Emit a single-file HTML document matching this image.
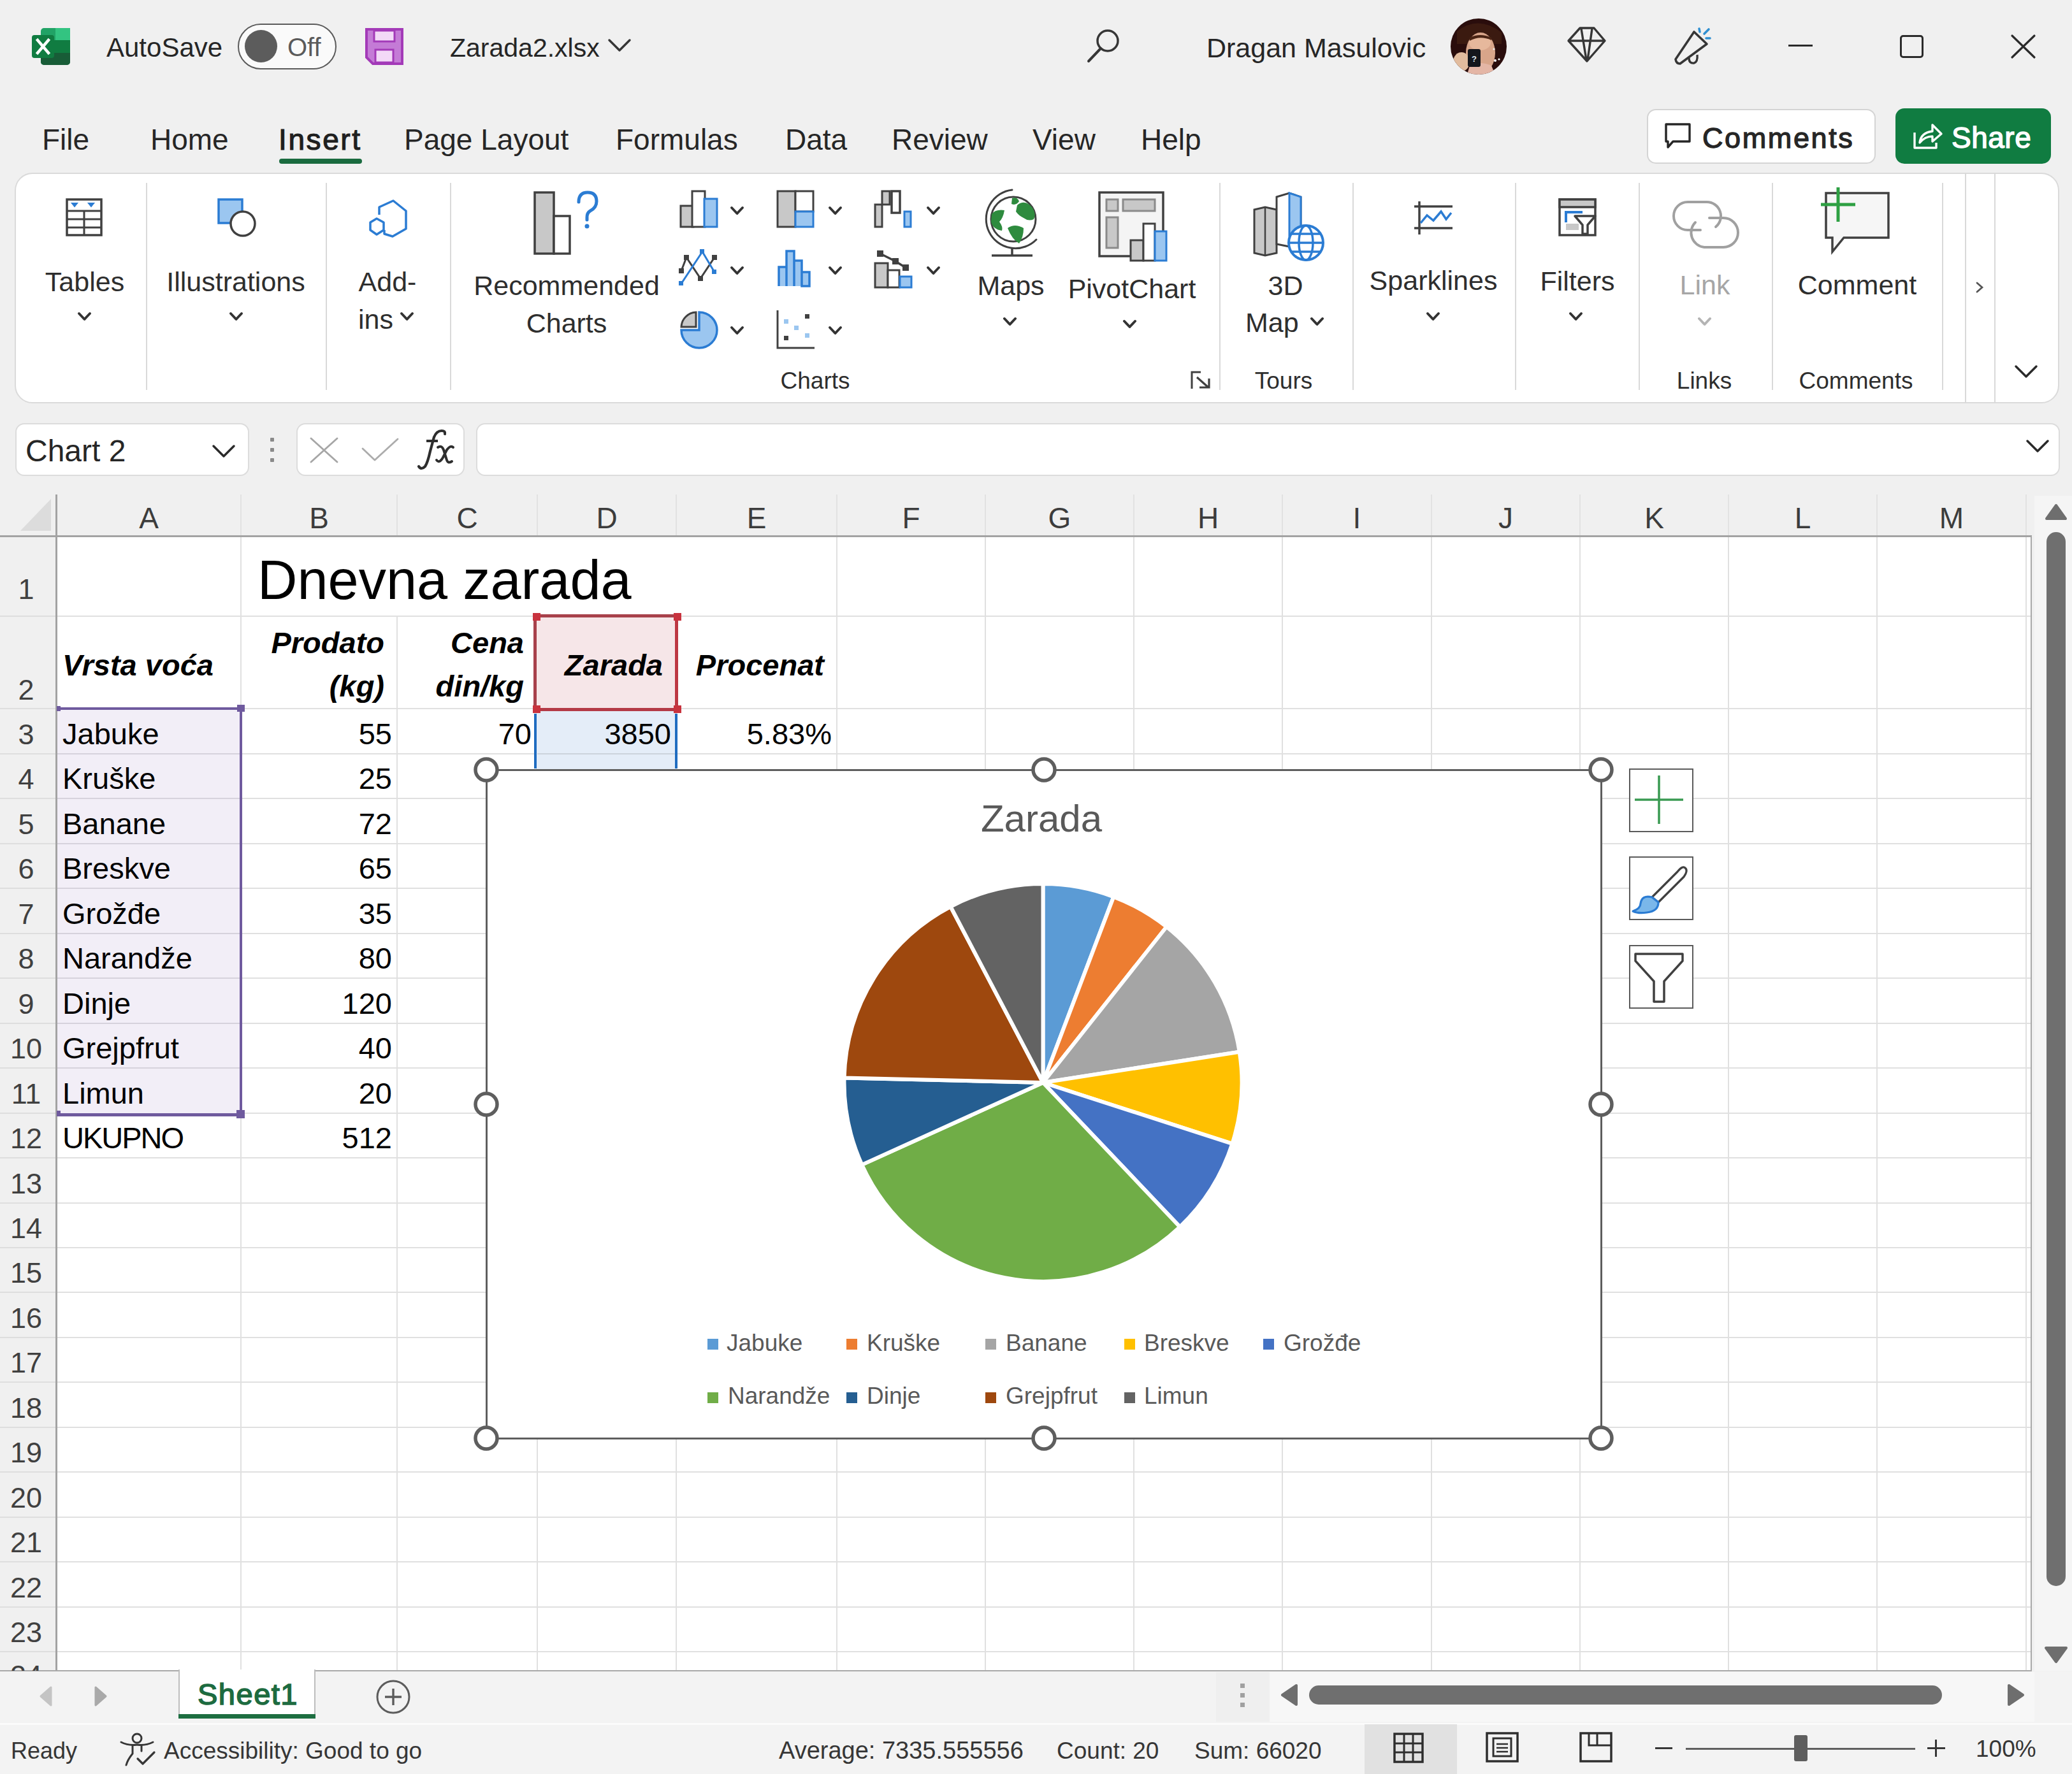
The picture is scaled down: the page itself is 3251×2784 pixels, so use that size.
<!DOCTYPE html>
<html><head><meta charset="utf-8">
<style>
*{box-sizing:border-box;margin:0;padding:0}
html,body{width:3251px;height:2784px;overflow:hidden;background:#f0f0f0;font-family:"Liberation Sans",sans-serif;color:#242424;position:relative}
.a{position:absolute}
.t{position:absolute;white-space:nowrap;line-height:1}
svg{position:absolute;overflow:visible}
</style></head><body>
<svg style="left:50px;top:44px;" width="60" height="58" viewBox="0 0 60 58">
<rect x="14" y="0" width="46" height="58" rx="5" fill="#21a366"/>
<rect x="14" y="19" width="46" height="20" fill="#107c41"/>
<path d="M14 39 H60 V53 a5 5 0 0 1 -5 5 H19 a5 5 0 0 1 -5 -5 Z" fill="#185c37"/>
<rect x="37" y="0" width="23" height="19" rx="0" fill="#33c481"/>
<rect x="0" y="11" width="35" height="36" rx="4" fill="#107c41"/>
<path d="M9 19 L26 39 M26 19 L9 39" stroke="#fff" stroke-width="4.5" stroke-linecap="square"/>
</svg>
<div class="t" style="left:167.0px;top:54.4px;font-size:42px;color:#262626;font-weight:normal;font-style:normal;">AutoSave</div>
<div class="a" style="left:373px;top:37px;width:155px;height:72px;border:2.5px solid #5a5a5a;border-radius:36px;background:#fafafa"></div>
<div class="a" style="left:384px;top:47px;width:51px;height:51px;border-radius:50%;background:#5c5c5c"></div>
<div class="t" style="left:451.0px;top:54.1px;font-size:40px;color:#5a5a5a;font-weight:normal;font-style:normal;">Off</div>
<svg style="left:573px;top:44px;" width="60" height="58" viewBox="0 0 60 58">
<path d="M2 2 H58 V56 H12 L2 46 Z" fill="#c47bd6" stroke="#a33ab8" stroke-width="4" stroke-linejoin="miter"/>
<rect x="14" y="4" width="32" height="17" fill="#f3d9f7" stroke="#a33ab8" stroke-width="3"/>
<rect x="16" y="34" width="28" height="20" fill="#f3d9f7" stroke="#a33ab8" stroke-width="3"/>
</svg>
<div class="t" style="left:706.0px;top:55.3px;font-size:41px;color:#262626;font-weight:normal;font-style:normal;">Zarada2.xlsx</div>
<svg style="left:953px;top:60px;" width="40" height="24" viewBox="0 0 40 24"><path d="M3 3 L19 19 L35 3" fill="none" stroke="#363636" stroke-width="3.5" stroke-linecap="round" stroke-linejoin="round"/></svg>
<svg style="left:1703px;top:44px;" width="56" height="58" viewBox="0 0 56 58"><circle cx="35" cy="20" r="16" fill="none" stroke="#363636" stroke-width="3.5"/><path d="M24 32 L5 52" stroke="#363636" stroke-width="4" stroke-linecap="round"/></svg>
<div class="t" style="left:1893.0px;top:53.6px;font-size:43px;color:#262626;font-weight:normal;font-style:normal;">Dragan Masulovic</div>
<svg style="left:2276px;top:29px;" width="88" height="88" viewBox="0 0 88 88">
<defs><clipPath id="avc"><circle cx="44" cy="44" r="44"/></clipPath></defs>
<g clip-path="url(#avc)">
<rect width="88" height="88" fill="#2a0d0c"/>
<path d="M10 20 Q44 -6 80 22 L80 40 L10 40 Z" fill="#3b1a10"/>
<ellipse cx="47" cy="54" rx="23" ry="32" fill="#d8a58a"/>
<ellipse cx="46" cy="38" rx="17" ry="12" fill="#e6b89c"/>
<path d="M30 30 Q46 22 64 30 L64 34 Q46 26 30 35 Z" fill="#4a2414"/>
<path d="M26 88 L30 74 Q46 66 64 74 L70 88 Z" fill="#e4b6a6"/>
<ellipse cx="17" cy="68" rx="13" ry="15" fill="#e2bc9e"/>
<rect x="27" y="48" width="20" height="28" rx="3" fill="#14161c"/>
<text x="37" y="68" font-size="13" fill="#dfe6ee" font-family="Liberation Sans" font-weight="bold" text-anchor="middle">?</text>
<circle cx="70" cy="66" r="2" fill="#fff"/><circle cx="76" cy="64" r="1.6" fill="#fff"/><circle cx="68" cy="48" r="1.5" fill="#eee"/>
</g></svg>
<svg style="left:2458px;top:40px;" width="64" height="60" viewBox="0 0 64 60"><path d="M21 4 H43 L60 24 L32 56 L3 24 Z M3 24 H60 M23 5 L31 54 M40 5 L33 54" fill="none" stroke="#363636" stroke-width="3.4" stroke-linejoin="round"/></svg>
<svg style="left:2624px;top:40px;" width="64" height="64" viewBox="0 0 64 64">
<path d="M5 53 L34 10 L54 29 L12 60 Q6 60 5 53 Z" fill="none" stroke="#363636" stroke-width="3.6" stroke-linejoin="round"/>
<path d="M26 51 Q26 60 34 59 Q40 57 39 46" fill="none" stroke="#363636" stroke-width="3.4"/>
<path d="M42 5 L43 10 M50 13 L57 6 M53 20 L59 20" stroke="#2f8fd1" stroke-width="3.6" stroke-linecap="round"/>
</svg>
<div class="a" style="left:2806px;top:70px;width:38px;height:3px;background:#2a2a2a;"></div>
<div class="a" style="left:2981px;top:55px;width:37px;height:36px;border:3px solid #2a2a2a;border-radius:5px"></div>
<svg style="left:3154px;top:53px;" width="42" height="40" viewBox="0 0 42 40"><path d="M3 3 L38 37 M38 3 L3 37" stroke="#2a2a2a" stroke-width="3.2" stroke-linecap="round"/></svg>
<div class="t" style="left:66.0px;top:196.1px;font-size:46px;color:#262626;font-weight:normal;font-style:normal;">File</div>
<div class="t" style="left:236.0px;top:196.1px;font-size:46px;color:#262626;font-weight:normal;font-style:normal;">Home</div>
<div class="t" style="left:634.0px;top:196.1px;font-size:46px;color:#262626;font-weight:normal;font-style:normal;">Page Layout</div>
<div class="t" style="left:966.0px;top:196.1px;font-size:46px;color:#262626;font-weight:normal;font-style:normal;">Formulas</div>
<div class="t" style="left:1232.0px;top:196.1px;font-size:46px;color:#262626;font-weight:normal;font-style:normal;">Data</div>
<div class="t" style="left:1399.0px;top:196.1px;font-size:46px;color:#262626;font-weight:normal;font-style:normal;">Review</div>
<div class="t" style="left:1620.0px;top:196.1px;font-size:46px;color:#262626;font-weight:normal;font-style:normal;">View</div>
<div class="t" style="left:1790.0px;top:196.1px;font-size:46px;color:#262626;font-weight:normal;font-style:normal;">Help</div>
<div class="t" style="left:437.0px;top:196.1px;font-size:46px;color:#1f1f1f;font-weight:normal;font-style:normal;-webkit-text-stroke:1.2px #1f1f1f;letter-spacing:2.6px;">Insert</div>
<div class="a" style="left:438px;top:249px;width:130px;height:8px;background:#1a6b3f;border-radius:4px"></div>
<div class="a" style="left:2584px;top:171px;width:359px;height:86px;background:#fff;border:2px solid #d4d4d4;border-radius:14px"></div>
<svg style="left:2611px;top:192px;" width="44" height="44" viewBox="0 0 44 44"><path d="M3 3 H40 V30 H14 L6 39 V30 H3 Z" fill="none" stroke="#262626" stroke-width="3.4" stroke-linejoin="round"/></svg>
<div class="t" style="left:2671.0px;top:193.9px;font-size:45px;color:#262626;font-weight:normal;font-style:normal;-webkit-text-stroke:1.3px #262626;letter-spacing:2.6px;">Comments</div>
<div class="a" style="left:2974px;top:170px;width:244px;height:87px;background:#107c41;border-radius:14px"></div>
<svg style="left:3000px;top:190px;" width="48" height="46" viewBox="0 0 48 46"><path d="M4 18 V42 H38 V34" fill="none" stroke="#fff" stroke-width="3.4" stroke-linejoin="round"/><path d="M12 34 Q14 18 32 16 V6 L46 20 L32 32 V24 Q20 24 12 34 Z" fill="none" stroke="#fff" stroke-width="3.4" stroke-linejoin="round"/></svg>
<div class="t" style="left:3062.0px;top:193.1px;font-size:46px;color:#ffffff;font-weight:normal;font-style:normal;-webkit-text-stroke:1.4px #ffffff;letter-spacing:0.5px;">Share</div>
<div class="a" style="left:23px;top:271px;width:3208px;height:362px;background:#fff;border:2px solid #dadada;border-radius:28px"></div>
<div class="a" style="left:229px;top:287px;width:2px;height:325px;background:#d9d9d9;"></div>
<div class="a" style="left:511px;top:287px;width:2px;height:325px;background:#d9d9d9;"></div>
<div class="a" style="left:706px;top:287px;width:2px;height:325px;background:#d9d9d9;"></div>
<div class="a" style="left:1913px;top:287px;width:2px;height:325px;background:#d9d9d9;"></div>
<div class="a" style="left:2122px;top:287px;width:2px;height:325px;background:#d9d9d9;"></div>
<div class="a" style="left:2377px;top:287px;width:2px;height:325px;background:#d9d9d9;"></div>
<div class="a" style="left:2571px;top:287px;width:2px;height:325px;background:#d9d9d9;"></div>
<div class="a" style="left:2780px;top:287px;width:2px;height:325px;background:#d9d9d9;"></div>
<div class="a" style="left:3047px;top:287px;width:2px;height:325px;background:#d9d9d9;"></div>
<div class="a" style="left:3083px;top:272px;width:2px;height:360px;background:#d9d9d9;"></div>
<div class="a" style="left:3129px;top:272px;width:2px;height:360px;background:#d9d9d9;"></div>
<svg style="left:103px;top:311px;" width="58" height="60" viewBox="0 0 58 60">
<rect x="2" y="2" width="54" height="56" fill="#fff" stroke="#404040" stroke-width="3.5"/>
<path d="M2 20 H56 M2 33 H56 M2 46 H56 M29 20 V58" stroke="#404040" stroke-width="3"/>
<path d="M10 8 L18 8 L14 13 Z M36 8 L44 8 L40 13 Z" fill="#2b7cd3" stroke="#2b7cd3" stroke-width="2"/></svg>
<div class="t" style="left:133.0px;top:420.6px;font-size:43px;color:#2e2e2e;font-weight:normal;font-style:normal;transform:translateX(-50%);">Tables</div>
<svg style="left:120px;top:488px;" width="25" height="17" viewBox="0 0 25 17"><path d="M4 4 L12.5 13 L21 4" fill="none" stroke="#333333" stroke-width="4" stroke-linecap="round" stroke-linejoin="round"/></svg>
<svg style="left:340px;top:310px;" width="64" height="64" viewBox="0 0 64 64">
<path d="M3 3 H40 V22 A22 22 0 0 0 22 40 H3 Z" fill="#9bc6f0" stroke="#2b7cd3" stroke-width="3.5"/>
<circle cx="41" cy="41" r="19" fill="#fff" stroke="#404040" stroke-width="3.5"/></svg>
<div class="t" style="left:370.0px;top:420.6px;font-size:43px;color:#2e2e2e;font-weight:normal;font-style:normal;transform:translateX(-50%);">Illustrations</div>
<svg style="left:358px;top:488px;" width="25" height="17" viewBox="0 0 25 17"><path d="M4 4 L12.5 13 L21 4" fill="none" stroke="#333333" stroke-width="4" stroke-linecap="round" stroke-linejoin="round"/></svg>
<svg style="left:577px;top:311px;" width="64" height="62" viewBox="0 0 64 62">
<path d="M26 50 L26 56 L39 60 L60 48 V20 L40 4 L18 14 V26" fill="none" stroke="#2b7cd3" stroke-width="3.5" stroke-linejoin="round"/>
<path d="M4 38 L14 32 L25 38 V50 L14 57 L4 50 Z" fill="none" stroke="#2b7cd3" stroke-width="3.5" stroke-linejoin="round"/></svg>
<div class="t" style="left:608.0px;top:420.6px;font-size:43px;color:#2e2e2e;font-weight:normal;font-style:normal;transform:translateX(-50%);">Add-</div>
<div class="t" style="left:562.0px;top:479.6px;font-size:43px;color:#2e2e2e;font-weight:normal;font-style:normal;">ins</div>
<svg style="left:626px;top:488px;" width="25" height="17" viewBox="0 0 25 17"><path d="M4 4 L12.5 13 L21 4" fill="none" stroke="#333333" stroke-width="4" stroke-linecap="round" stroke-linejoin="round"/></svg>
<svg style="left:836px;top:299px;" width="108" height="106" viewBox="0 0 108 106">
<rect x="3" y="3" width="30" height="96" fill="#c8c8c8" stroke="#404040" stroke-width="3.5"/>
<rect x="33" y="40" width="25" height="59" fill="#fff" stroke="#404040" stroke-width="3.5"/>
<path d="M72 18 Q72 3 86 3 Q100 3 100 17 Q100 27 90 32 Q85 35 85 42 V46" fill="none" stroke="#2b7cd3" stroke-width="5" stroke-linecap="round"/>
<circle cx="85" cy="56" r="3.5" fill="#2b7cd3"/></svg>
<div class="t" style="left:889.0px;top:426.6px;font-size:43px;color:#2e2e2e;font-weight:normal;font-style:normal;transform:translateX(-50%);">Recommended</div>
<div class="t" style="left:889.0px;top:485.6px;font-size:43px;color:#2e2e2e;font-weight:normal;font-style:normal;transform:translateX(-50%);">Charts</div>
<svg style="left:1066px;top:298px;" width="62" height="60" viewBox="0 0 62 60">
<rect x="2" y="25" width="20" height="33" fill="#c8c8c8" stroke="#404040" stroke-width="3"/>
<rect x="20" y="2" width="20" height="56" fill="#fff" stroke="#404040" stroke-width="3"/>
<rect x="39" y="14" width="20" height="44" fill="#9bc6f0" stroke="#2b7cd3" stroke-width="3"/></svg>
<svg style="left:1144px;top:322px;" width="25" height="17" viewBox="0 0 25 17"><path d="M4 4 L12.5 13 L21 4" fill="none" stroke="#333333" stroke-width="4" stroke-linecap="round" stroke-linejoin="round"/></svg>
<svg style="left:1218px;top:298px;" width="62" height="60" viewBox="0 0 62 60">
<rect x="2" y="2" width="28" height="56" fill="#c8c8c8" stroke="#404040" stroke-width="3"/>
<rect x="30" y="2" width="28" height="32" fill="#fff" stroke="#404040" stroke-width="3"/>
<rect x="30" y="34" width="28" height="24" fill="#9bc6f0" stroke="#2b7cd3" stroke-width="3"/></svg>
<svg style="left:1298px;top:322px;" width="25" height="17" viewBox="0 0 25 17"><path d="M4 4 L12.5 13 L21 4" fill="none" stroke="#333333" stroke-width="4" stroke-linecap="round" stroke-linejoin="round"/></svg>
<svg style="left:1371px;top:298px;" width="62" height="60" viewBox="0 0 62 60">
<rect x="2" y="23" width="11" height="35" fill="#c8c8c8" stroke="#404040" stroke-width="3"/>
<rect x="13" y="2" width="12" height="21" fill="#c8c8c8" stroke="#404040" stroke-width="3"/>
<rect x="28" y="2" width="13" height="34" fill="#fff" stroke="#404040" stroke-width="3.5"/>
<rect x="48" y="34" width="10" height="24" fill="#9bc6f0" stroke="#2b7cd3" stroke-width="3"/></svg>
<svg style="left:1452px;top:322px;" width="25" height="17" viewBox="0 0 25 17"><path d="M4 4 L12.5 13 L21 4" fill="none" stroke="#333333" stroke-width="4" stroke-linecap="round" stroke-linejoin="round"/></svg>
<svg style="left:1066px;top:391px;" width="62" height="62" viewBox="0 0 62 62">
<path d="M3 34 L11 13 L33 46 L55 13" fill="none" stroke="#404040" stroke-width="3"/>
<path d="M3 54 L36 4 L55 36" fill="none" stroke="#2b7cd3" stroke-width="3"/>
<g fill="#404040"><rect x="-1" y="30" width="8" height="8"/><rect x="7" y="9" width="8" height="8"/><rect x="29" y="42" width="8" height="8"/><rect x="51" y="9" width="8" height="8"/></g>
<g fill="#2b7cd3"><rect x="-1" y="50" width="7" height="7"/><rect x="32" y="0" width="7" height="7"/><rect x="51" y="32" width="7" height="7"/></g></svg>
<svg style="left:1144px;top:416px;" width="25" height="17" viewBox="0 0 25 17"><path d="M4 4 L12.5 13 L21 4" fill="none" stroke="#333333" stroke-width="4" stroke-linecap="round" stroke-linejoin="round"/></svg>
<svg style="left:1220px;top:391px;" width="60" height="62" viewBox="0 0 60 62">
<path d="M2 58 V28 H14 V58 M14 58 V3 H26 V58 M26 58 V18 H38 V58 M38 58 V36 H50 V58 Z" fill="#9bc6f0" stroke="#2b7cd3" stroke-width="3.5" stroke-linejoin="miter"/></svg>
<svg style="left:1298px;top:416px;" width="25" height="17" viewBox="0 0 25 17"><path d="M4 4 L12.5 13 L21 4" fill="none" stroke="#333333" stroke-width="4" stroke-linecap="round" stroke-linejoin="round"/></svg>
<svg style="left:1371px;top:391px;" width="62" height="62" viewBox="0 0 62 62">
<rect x="2" y="22" width="20" height="38" fill="#c8c8c8" stroke="#404040" stroke-width="3"/>
<rect x="22" y="33" width="18" height="27" fill="#fff" stroke="#404040" stroke-width="3"/>
<rect x="41" y="43" width="18" height="17" fill="#9bc6f0" stroke="#2b7cd3" stroke-width="3"/>
<path d="M10 7 L34 19 L50 29" fill="none" stroke="#404040" stroke-width="3.5"/>
<g fill="#404040"><rect x="5" y="2" width="10" height="10"/><rect x="29" y="14" width="10" height="10"/><rect x="45" y="24" width="10" height="10"/></g></svg>
<svg style="left:1452px;top:416px;" width="25" height="17" viewBox="0 0 25 17"><path d="M4 4 L12.5 13 L21 4" fill="none" stroke="#333333" stroke-width="4" stroke-linecap="round" stroke-linejoin="round"/></svg>
<svg style="left:1066px;top:487px;" width="62" height="62" viewBox="0 0 62 62">
<path d="M31 31 V3 A28 28 0 1 1 3 31 Z" fill="#9bc6f0" stroke="#2b7cd3" stroke-width="3.5"/>
<path d="M26 26 V3 A24 24 0 0 0 3 26 Z" fill="#c8c8c8" stroke="#404040" stroke-width="3"/></svg>
<svg style="left:1144px;top:510px;" width="25" height="17" viewBox="0 0 25 17"><path d="M4 4 L12.5 13 L21 4" fill="none" stroke="#333333" stroke-width="4" stroke-linecap="round" stroke-linejoin="round"/></svg>
<svg style="left:1218px;top:487px;" width="62" height="62" viewBox="0 0 62 62">
<path d="M2 0 V59 H60" fill="none" stroke="#404040" stroke-width="3"/>
<rect x="12" y="40" width="7" height="7" fill="#404040"/><rect x="45" y="6" width="7" height="7" fill="#404040"/>
<rect x="12" y="14" width="7" height="7" fill="#9bc6f0"/><rect x="28" y="24" width="7" height="7" fill="#9bc6f0"/><rect x="45" y="36" width="7" height="7" fill="#9bc6f0"/></svg>
<svg style="left:1298px;top:510px;" width="25" height="17" viewBox="0 0 25 17"><path d="M4 4 L12.5 13 L21 4" fill="none" stroke="#333333" stroke-width="4" stroke-linecap="round" stroke-linejoin="round"/></svg>
<div class="t" style="left:1279.0px;top:578.7px;font-size:37px;color:#2e2e2e;font-weight:normal;font-style:normal;transform:translateX(-50%);">Charts</div>
<svg style="left:1536px;top:292px;" width="96" height="114" viewBox="0 0 96 114">
<path d="M52 6 A46 46 0 1 0 90 84" fill="none" stroke="#404040" stroke-width="3" stroke-linecap="round"/>
<circle cx="54" cy="52" r="35" fill="#fff" stroke="#404040" stroke-width="3"/>
<path d="M60 30 Q72 20 84 34 Q90 44 86 52 Q78 56 70 50 Q62 46 58 40 Z" fill="#2e8b3e"/>
<path d="M20 44 Q26 36 40 38 Q38 50 32 56 Q38 64 36 70 Q22 68 19 56 Z" fill="#2e8b3e"/>
<path d="M52 19 Q60 16 63 24 Q58 31 51 28 Z" fill="#2e8b3e"/>
<path d="M45 66 Q56 58 70 66 Q70 80 63 90 Q52 84 45 66 Z" fill="#2e8b3e"/>
<path d="M52 98 V108 M20 109 H84" stroke="#404040" stroke-width="3.5"/></svg>
<div class="t" style="left:1586.0px;top:426.6px;font-size:43px;color:#2e2e2e;font-weight:normal;font-style:normal;transform:translateX(-50%);">Maps</div>
<svg style="left:1572px;top:496px;" width="25" height="17" viewBox="0 0 25 17"><path d="M4 4 L12.5 13 L21 4" fill="none" stroke="#333333" stroke-width="4" stroke-linecap="round" stroke-linejoin="round"/></svg>
<svg style="left:1722px;top:299px;" width="114" height="114" viewBox="0 0 114 114">
<rect x="3" y="3" width="100" height="100" fill="#f4f4f4" stroke="#404040" stroke-width="3.5"/>
<rect x="14" y="14" width="18" height="18" fill="#c8c8c8" stroke="#8a8a8a" stroke-width="3"/>
<rect x="40" y="14" width="50" height="18" fill="#c8c8c8" stroke="#8a8a8a" stroke-width="3"/>
<rect x="14" y="42" width="18" height="48" fill="#c8c8c8" stroke="#8a8a8a" stroke-width="3"/>
<rect x="52" y="78" width="20" height="32" fill="#c8c8c8" stroke="#404040" stroke-width="3"/>
<rect x="72" y="52" width="18" height="58" fill="#fff" stroke="#404040" stroke-width="3"/>
<rect x="90" y="64" width="18" height="46" fill="#9bc6f0" stroke="#2b7cd3" stroke-width="3"/></svg>
<div class="t" style="left:1776.0px;top:431.6px;font-size:43px;color:#2e2e2e;font-weight:normal;font-style:normal;transform:translateX(-50%);">PivotChart</div>
<svg style="left:1760px;top:500px;" width="25" height="17" viewBox="0 0 25 17"><path d="M4 4 L12.5 13 L21 4" fill="none" stroke="#333333" stroke-width="4" stroke-linecap="round" stroke-linejoin="round"/></svg>
<svg style="left:1868px;top:582px;" width="34" height="30" viewBox="0 0 34 30"><path d="M2 4 V2 H16 M2 2 V28" fill="none" stroke="#404040" stroke-width="3"/><path d="M10 10 L28 26 M14 26 H29 V12" fill="none" stroke="#404040" stroke-width="3.2"/></svg>
<svg style="left:1965px;top:299px;" width="116" height="114" viewBox="0 0 116 114">
<path d="M3 30 L20 26 L38 30 V98 L20 102 L3 98 Z" fill="#c8c8c8" stroke="#404040" stroke-width="3"/>
<path d="M20 26 V102" stroke="#404040" stroke-width="2.5"/>
<path d="M38 10 L58 4 L76 10 V64 L58 88 L38 84 Z" fill="#fff" stroke="#404040" stroke-width="3"/>
<path d="M58 4 L76 10 V60 L58 70 Z" fill="#9bc6f0" stroke="#2b7cd3" stroke-width="3"/>
<circle cx="84" cy="82" r="27" fill="#fff" stroke="#2b7cd3" stroke-width="4"/>
<ellipse cx="84" cy="82" rx="11" ry="27" fill="none" stroke="#2b7cd3" stroke-width="3.5"/>
<path d="M57 82 H111 M62 68 H106 M62 96 H106" stroke="#2b7cd3" stroke-width="3.5"/></svg>
<div class="t" style="left:2017.0px;top:426.6px;font-size:43px;color:#2e2e2e;font-weight:normal;font-style:normal;transform:translateX(-50%);">3D</div>
<div class="t" style="left:1954.0px;top:484.6px;font-size:43px;color:#2e2e2e;font-weight:normal;font-style:normal;">Map</div>
<svg style="left:2054px;top:496px;" width="25" height="17" viewBox="0 0 25 17"><path d="M4 4 L12.5 13 L21 4" fill="none" stroke="#333333" stroke-width="4" stroke-linecap="round" stroke-linejoin="round"/></svg>
<div class="t" style="left:2014.0px;top:578.7px;font-size:37px;color:#2e2e2e;font-weight:normal;font-style:normal;transform:translateX(-50%);">Tours</div>
<svg style="left:2217px;top:314px;" width="64" height="56" viewBox="0 0 64 56">
<path d="M10 2 V54 M2 10 H62 M2 44 H62" stroke="#404040" stroke-width="3.5"/>
<path d="M12 36 L22 24 L32 32 L44 18 L52 30 L60 20" fill="none" stroke="#2b7cd3" stroke-width="3.5"/></svg>
<div class="t" style="left:2249.0px;top:418.6px;font-size:43px;color:#2e2e2e;font-weight:normal;font-style:normal;transform:translateX(-50%);">Sparklines</div>
<svg style="left:2236px;top:488px;" width="25" height="17" viewBox="0 0 25 17"><path d="M4 4 L12.5 13 L21 4" fill="none" stroke="#333333" stroke-width="4" stroke-linecap="round" stroke-linejoin="round"/></svg>
<svg style="left:2445px;top:311px;" width="62" height="62" viewBox="0 0 62 62">
<rect x="2" y="2" width="56" height="56" fill="#fff" stroke="#404040" stroke-width="3.5"/>
<rect x="2" y="2" width="56" height="12" fill="#c8c8c8" stroke="#404040" stroke-width="3.5"/>
<path d="M12 38 V22 H38" fill="none" stroke="#2b7cd3" stroke-width="4"/>
<rect x="12" y="40" width="20" height="10" fill="#c8c8c8"/>
<path d="M26 28 H58 L46 42 V56 H38 V42 Z" fill="#fff" stroke="#404040" stroke-width="3.5" stroke-linejoin="round"/></svg>
<div class="t" style="left:2475.0px;top:419.6px;font-size:43px;color:#2e2e2e;font-weight:normal;font-style:normal;transform:translateX(-50%);">Filters</div>
<svg style="left:2460px;top:488px;" width="25" height="17" viewBox="0 0 25 17"><path d="M4 4 L12.5 13 L21 4" fill="none" stroke="#333333" stroke-width="4" stroke-linecap="round" stroke-linejoin="round"/></svg>
<svg style="left:2624px;top:314px;" width="106" height="76" viewBox="0 0 106 76">
<path d="M44 47 H24 A22 22 0 0 1 24 3 H54 A22 22 0 0 1 68 42" fill="none" stroke="#a0a0a0" stroke-width="4" stroke-linecap="round"/>
<path d="M58 28 H80 A23 23 0 0 1 80 74 H50 A23 23 0 0 1 36 35" fill="none" stroke="#a0a0a0" stroke-width="4" stroke-linecap="round"/></svg>
<div class="t" style="left:2675.0px;top:425.6px;font-size:43px;color:#a6a6a6;font-weight:normal;font-style:normal;transform:translateX(-50%);">Link</div>
<svg style="left:2662px;top:496px;" width="25" height="17" viewBox="0 0 25 17"><path d="M4 4 L12.5 13 L21 4" fill="none" stroke="#b4b4b4" stroke-width="4" stroke-linecap="round" stroke-linejoin="round"/></svg>
<div class="t" style="left:2674.0px;top:578.7px;font-size:37px;color:#2e2e2e;font-weight:normal;font-style:normal;transform:translateX(-50%);">Links</div>
<svg style="left:2855px;top:291px;" width="114" height="110" viewBox="0 0 114 110">
<path d="M10 12 H108 V82 H38 L20 104 V82 H10 Z" fill="#f6f6f6" stroke="#404040" stroke-width="3.5" stroke-linejoin="miter"/>
<path d="M29 3 V57 M2 30 H56" stroke="#2ea043" stroke-width="5"/></svg>
<div class="t" style="left:2914.0px;top:425.6px;font-size:43px;color:#2e2e2e;font-weight:normal;font-style:normal;transform:translateX(-50%);">Comment</div>
<div class="t" style="left:2912.0px;top:578.7px;font-size:37px;color:#2e2e2e;font-weight:normal;font-style:normal;transform:translateX(-50%);">Comments</div>
<svg style="left:3099px;top:441px;" width="16" height="20" viewBox="0 0 16 20"><path d="M3 3 L11 10 L3 17" fill="none" stroke="#555" stroke-width="2.8" stroke-linecap="round"/></svg>
<svg style="left:3160px;top:572px;" width="40" height="24" viewBox="0 0 40 24"><path d="M3 3 L19 19 L35 3" fill="none" stroke="#2a2a2a" stroke-width="3.5" stroke-linecap="round" stroke-linejoin="round"/></svg>
<div class="a" style="left:24px;top:664px;width:367px;height:83px;background:#fff;border:2px solid #dcdcdc;border-radius:14px"></div>
<div class="t" style="left:40.0px;top:684.4px;font-size:48px;color:#262626;font-weight:normal;font-style:normal;">Chart 2</div>
<svg style="left:332px;top:697px;" width="40" height="24" viewBox="0 0 40 24"><path d="M3 3 L19 19 L35 3" fill="none" stroke="#2a2a2a" stroke-width="3.5" stroke-linecap="round" stroke-linejoin="round"/></svg>
<div class="a" style="left:424px;top:687px;width:6px;height:6px;background:#8a8a8a;border-radius:1px"></div>
<div class="a" style="left:424px;top:703px;width:6px;height:6px;background:#8a8a8a;border-radius:1px"></div>
<div class="a" style="left:424px;top:719px;width:6px;height:6px;background:#8a8a8a;border-radius:1px"></div>
<div class="a" style="left:465px;top:664px;width:264px;height:83px;background:#fff;border:2px solid #dcdcdc;border-radius:14px"></div>
<svg style="left:485px;top:685px;" width="48" height="44" viewBox="0 0 48 44"><path d="M3 3 L44 40 M44 3 L3 40" stroke="#a6a6a6" stroke-width="2.8" stroke-linecap="round"/></svg>
<svg style="left:566px;top:686px;" width="62" height="40" viewBox="0 0 62 40"><path d="M3 18 L22 36 L58 3" fill="none" stroke="#acacac" stroke-width="2.8" stroke-linecap="round" stroke-linejoin="round"/></svg>
<svg style="left:655px;top:672px;" width="62" height="68" viewBox="0 0 62 68"><path d="M2 60 Q6 66 12 60 Q16 54 20 36 L26 14 Q30 4 38 4 Q44 4 43 9" fill="none" stroke="#2e2e2e" stroke-width="4.2" stroke-linecap="round"/><path d="M14 20 H32" stroke="#2e2e2e" stroke-width="4"/><path d="M32 30 Q38 26 41 34 L46 50 Q48 56 54 52 M56 30 Q52 26 46 34 L40 46 Q34 56 30 50" fill="none" stroke="#2e2e2e" stroke-width="4" stroke-linecap="round"/></svg>
<div class="a" style="left:747px;top:664px;width:2485px;height:83px;background:#fff;border:2px solid #dcdcdc;border-radius:14px"></div>
<svg style="left:3178px;top:689px;" width="40" height="26" viewBox="0 0 40 26"><path d="M3 3 L19 19 L35 3" fill="none" stroke="#2a2a2a" stroke-width="3.5" stroke-linecap="round" stroke-linejoin="round"/></svg>
<svg style="left:30px;top:781px;" width="52" height="54" viewBox="0 0 52 54"><path d="M50 2 V52 H2 Z" fill="#dcdcdc"/></svg>
<div class="a" style="left:90px;top:842px;width:3098px;height:1780px;background:#ffffff;"></div>
<div class="a" style="left:377px;top:776px;width:2px;height:66px;background:#e2e2e2;"></div>
<div class="a" style="left:622px;top:776px;width:2px;height:66px;background:#e2e2e2;"></div>
<div class="a" style="left:842px;top:776px;width:2px;height:66px;background:#e2e2e2;"></div>
<div class="a" style="left:1060px;top:776px;width:2px;height:66px;background:#e2e2e2;"></div>
<div class="a" style="left:1312px;top:776px;width:2px;height:66px;background:#e2e2e2;"></div>
<div class="a" style="left:1545px;top:776px;width:2px;height:66px;background:#e2e2e2;"></div>
<div class="a" style="left:1778px;top:776px;width:2px;height:66px;background:#e2e2e2;"></div>
<div class="a" style="left:2011px;top:776px;width:2px;height:66px;background:#e2e2e2;"></div>
<div class="a" style="left:2245px;top:776px;width:2px;height:66px;background:#e2e2e2;"></div>
<div class="a" style="left:2478px;top:776px;width:2px;height:66px;background:#e2e2e2;"></div>
<div class="a" style="left:2711px;top:776px;width:2px;height:66px;background:#e2e2e2;"></div>
<div class="a" style="left:2944px;top:776px;width:2px;height:66px;background:#e2e2e2;"></div>
<div class="a" style="left:3178px;top:776px;width:2px;height:66px;background:#e2e2e2;"></div>
<div class="t" style="left:233.5px;top:790.1px;font-size:46px;color:#3c3c3c;font-weight:normal;font-style:normal;transform:translateX(-50%);">A</div>
<div class="t" style="left:500.5px;top:790.1px;font-size:46px;color:#3c3c3c;font-weight:normal;font-style:normal;transform:translateX(-50%);">B</div>
<div class="t" style="left:733.0px;top:790.1px;font-size:46px;color:#3c3c3c;font-weight:normal;font-style:normal;transform:translateX(-50%);">C</div>
<div class="t" style="left:952.0px;top:790.1px;font-size:46px;color:#3c3c3c;font-weight:normal;font-style:normal;transform:translateX(-50%);">D</div>
<div class="t" style="left:1187.0px;top:790.1px;font-size:46px;color:#3c3c3c;font-weight:normal;font-style:normal;transform:translateX(-50%);">E</div>
<div class="t" style="left:1429.5px;top:790.1px;font-size:46px;color:#3c3c3c;font-weight:normal;font-style:normal;transform:translateX(-50%);">F</div>
<div class="t" style="left:1662.5px;top:790.1px;font-size:46px;color:#3c3c3c;font-weight:normal;font-style:normal;transform:translateX(-50%);">G</div>
<div class="t" style="left:1895.5px;top:790.1px;font-size:46px;color:#3c3c3c;font-weight:normal;font-style:normal;transform:translateX(-50%);">H</div>
<div class="t" style="left:2129.0px;top:790.1px;font-size:46px;color:#3c3c3c;font-weight:normal;font-style:normal;transform:translateX(-50%);">I</div>
<div class="t" style="left:2362.5px;top:790.1px;font-size:46px;color:#3c3c3c;font-weight:normal;font-style:normal;transform:translateX(-50%);">J</div>
<div class="t" style="left:2595.5px;top:790.1px;font-size:46px;color:#3c3c3c;font-weight:normal;font-style:normal;transform:translateX(-50%);">K</div>
<div class="t" style="left:2828.5px;top:790.1px;font-size:46px;color:#3c3c3c;font-weight:normal;font-style:normal;transform:translateX(-50%);">L</div>
<div class="t" style="left:3062.0px;top:790.1px;font-size:46px;color:#3c3c3c;font-weight:normal;font-style:normal;transform:translateX(-50%);">M</div>
<div class="a" style="left:377px;top:842px;width:2px;height:1780px;background:#e0e0e0;"></div>
<div class="a" style="left:622px;top:967px;width:2px;height:1655px;background:#e0e0e0;"></div>
<div class="a" style="left:842px;top:967px;width:2px;height:1655px;background:#e0e0e0;"></div>
<div class="a" style="left:1060px;top:967px;width:2px;height:1655px;background:#e0e0e0;"></div>
<div class="a" style="left:1312px;top:842px;width:2px;height:1780px;background:#e0e0e0;"></div>
<div class="a" style="left:1545px;top:842px;width:2px;height:1780px;background:#e0e0e0;"></div>
<div class="a" style="left:1778px;top:842px;width:2px;height:1780px;background:#e0e0e0;"></div>
<div class="a" style="left:2011px;top:842px;width:2px;height:1780px;background:#e0e0e0;"></div>
<div class="a" style="left:2245px;top:842px;width:2px;height:1780px;background:#e0e0e0;"></div>
<div class="a" style="left:2478px;top:842px;width:2px;height:1780px;background:#e0e0e0;"></div>
<div class="a" style="left:2711px;top:842px;width:2px;height:1780px;background:#e0e0e0;"></div>
<div class="a" style="left:2944px;top:842px;width:2px;height:1780px;background:#e0e0e0;"></div>
<div class="a" style="left:3178px;top:842px;width:2px;height:1780px;background:#e0e0e0;"></div>
<div class="a" style="left:90px;top:966px;width:3098px;height:2px;background:#e0e0e0;"></div>
<div class="a" style="left:0px;top:966px;width:88px;height:2px;background:#dedede;"></div>
<div class="a" style="left:90px;top:1111px;width:3098px;height:2px;background:#e0e0e0;"></div>
<div class="a" style="left:0px;top:1111px;width:88px;height:2px;background:#dedede;"></div>
<div class="a" style="left:90px;top:1182px;width:3098px;height:2px;background:#e0e0e0;"></div>
<div class="a" style="left:0px;top:1182px;width:88px;height:2px;background:#dedede;"></div>
<div class="a" style="left:90px;top:1252px;width:3098px;height:2px;background:#e0e0e0;"></div>
<div class="a" style="left:0px;top:1252px;width:88px;height:2px;background:#dedede;"></div>
<div class="a" style="left:90px;top:1323px;width:3098px;height:2px;background:#e0e0e0;"></div>
<div class="a" style="left:0px;top:1323px;width:88px;height:2px;background:#dedede;"></div>
<div class="a" style="left:90px;top:1393px;width:3098px;height:2px;background:#e0e0e0;"></div>
<div class="a" style="left:0px;top:1393px;width:88px;height:2px;background:#dedede;"></div>
<div class="a" style="left:90px;top:1464px;width:3098px;height:2px;background:#e0e0e0;"></div>
<div class="a" style="left:0px;top:1464px;width:88px;height:2px;background:#dedede;"></div>
<div class="a" style="left:90px;top:1534px;width:3098px;height:2px;background:#e0e0e0;"></div>
<div class="a" style="left:0px;top:1534px;width:88px;height:2px;background:#dedede;"></div>
<div class="a" style="left:90px;top:1605px;width:3098px;height:2px;background:#e0e0e0;"></div>
<div class="a" style="left:0px;top:1605px;width:88px;height:2px;background:#dedede;"></div>
<div class="a" style="left:90px;top:1675px;width:3098px;height:2px;background:#e0e0e0;"></div>
<div class="a" style="left:0px;top:1675px;width:88px;height:2px;background:#dedede;"></div>
<div class="a" style="left:90px;top:1746px;width:3098px;height:2px;background:#e0e0e0;"></div>
<div class="a" style="left:0px;top:1746px;width:88px;height:2px;background:#dedede;"></div>
<div class="a" style="left:90px;top:1816px;width:3098px;height:2px;background:#e0e0e0;"></div>
<div class="a" style="left:0px;top:1816px;width:88px;height:2px;background:#dedede;"></div>
<div class="a" style="left:90px;top:1887px;width:3098px;height:2px;background:#e0e0e0;"></div>
<div class="a" style="left:0px;top:1887px;width:88px;height:2px;background:#dedede;"></div>
<div class="a" style="left:90px;top:1957px;width:3098px;height:2px;background:#e0e0e0;"></div>
<div class="a" style="left:0px;top:1957px;width:88px;height:2px;background:#dedede;"></div>
<div class="a" style="left:90px;top:2027px;width:3098px;height:2px;background:#e0e0e0;"></div>
<div class="a" style="left:0px;top:2027px;width:88px;height:2px;background:#dedede;"></div>
<div class="a" style="left:90px;top:2098px;width:3098px;height:2px;background:#e0e0e0;"></div>
<div class="a" style="left:0px;top:2098px;width:88px;height:2px;background:#dedede;"></div>
<div class="a" style="left:90px;top:2168px;width:3098px;height:2px;background:#e0e0e0;"></div>
<div class="a" style="left:0px;top:2168px;width:88px;height:2px;background:#dedede;"></div>
<div class="a" style="left:90px;top:2239px;width:3098px;height:2px;background:#e0e0e0;"></div>
<div class="a" style="left:0px;top:2239px;width:88px;height:2px;background:#dedede;"></div>
<div class="a" style="left:90px;top:2309px;width:3098px;height:2px;background:#e0e0e0;"></div>
<div class="a" style="left:0px;top:2309px;width:88px;height:2px;background:#dedede;"></div>
<div class="a" style="left:90px;top:2380px;width:3098px;height:2px;background:#e0e0e0;"></div>
<div class="a" style="left:0px;top:2380px;width:88px;height:2px;background:#dedede;"></div>
<div class="a" style="left:90px;top:2450px;width:3098px;height:2px;background:#e0e0e0;"></div>
<div class="a" style="left:0px;top:2450px;width:88px;height:2px;background:#dedede;"></div>
<div class="a" style="left:90px;top:2521px;width:3098px;height:2px;background:#e0e0e0;"></div>
<div class="a" style="left:0px;top:2521px;width:88px;height:2px;background:#dedede;"></div>
<div class="a" style="left:90px;top:2591px;width:3098px;height:2px;background:#e0e0e0;"></div>
<div class="a" style="left:0px;top:2591px;width:88px;height:2px;background:#dedede;"></div>
<div class="a" style="left:0px;top:840px;width:3188px;height:3px;background:#a3a3a3;"></div>
<div class="a" style="left:87px;top:776px;width:3px;height:1846px;background:#a3a3a3;"></div>
<div class="a" style="left:3186px;top:842px;width:2px;height:1780px;background:#a8a8a8;"></div>
<div class="a" style="left:0px;top:2621px;width:3188px;height:3px;background:#a8a8a8;"></div>
<div class="t" style="left:41.0px;top:901.9px;font-size:45px;color:#404040;font-weight:normal;font-style:normal;transform:translateX(-50%);">1</div>
<div class="t" style="left:41.0px;top:1059.9px;font-size:45px;color:#404040;font-weight:normal;font-style:normal;transform:translateX(-50%);">2</div>
<div class="t" style="left:41.0px;top:1129.9px;font-size:45px;color:#404040;font-weight:normal;font-style:normal;transform:translateX(-50%);">3</div>
<div class="t" style="left:41.0px;top:1199.9px;font-size:45px;color:#404040;font-weight:normal;font-style:normal;transform:translateX(-50%);">4</div>
<div class="t" style="left:41.0px;top:1270.9px;font-size:45px;color:#404040;font-weight:normal;font-style:normal;transform:translateX(-50%);">5</div>
<div class="t" style="left:41.0px;top:1340.9px;font-size:45px;color:#404040;font-weight:normal;font-style:normal;transform:translateX(-50%);">6</div>
<div class="t" style="left:41.0px;top:1411.9px;font-size:45px;color:#404040;font-weight:normal;font-style:normal;transform:translateX(-50%);">7</div>
<div class="t" style="left:41.0px;top:1481.9px;font-size:45px;color:#404040;font-weight:normal;font-style:normal;transform:translateX(-50%);">8</div>
<div class="t" style="left:41.0px;top:1552.9px;font-size:45px;color:#404040;font-weight:normal;font-style:normal;transform:translateX(-50%);">9</div>
<div class="t" style="left:41.0px;top:1622.9px;font-size:45px;color:#404040;font-weight:normal;font-style:normal;transform:translateX(-50%);">10</div>
<div class="t" style="left:41.0px;top:1693.9px;font-size:45px;color:#404040;font-weight:normal;font-style:normal;transform:translateX(-50%);">11</div>
<div class="t" style="left:41.0px;top:1763.9px;font-size:45px;color:#404040;font-weight:normal;font-style:normal;transform:translateX(-50%);">12</div>
<div class="t" style="left:41.0px;top:1834.9px;font-size:45px;color:#404040;font-weight:normal;font-style:normal;transform:translateX(-50%);">13</div>
<div class="t" style="left:41.0px;top:1904.9px;font-size:45px;color:#404040;font-weight:normal;font-style:normal;transform:translateX(-50%);">14</div>
<div class="t" style="left:41.0px;top:1974.9px;font-size:45px;color:#404040;font-weight:normal;font-style:normal;transform:translateX(-50%);">15</div>
<div class="t" style="left:41.0px;top:2045.9px;font-size:45px;color:#404040;font-weight:normal;font-style:normal;transform:translateX(-50%);">16</div>
<div class="t" style="left:41.0px;top:2115.9px;font-size:45px;color:#404040;font-weight:normal;font-style:normal;transform:translateX(-50%);">17</div>
<div class="t" style="left:41.0px;top:2186.9px;font-size:45px;color:#404040;font-weight:normal;font-style:normal;transform:translateX(-50%);">18</div>
<div class="t" style="left:41.0px;top:2256.9px;font-size:45px;color:#404040;font-weight:normal;font-style:normal;transform:translateX(-50%);">19</div>
<div class="t" style="left:41.0px;top:2327.9px;font-size:45px;color:#404040;font-weight:normal;font-style:normal;transform:translateX(-50%);">20</div>
<div class="t" style="left:41.0px;top:2397.9px;font-size:45px;color:#404040;font-weight:normal;font-style:normal;transform:translateX(-50%);">21</div>
<div class="t" style="left:41.0px;top:2468.9px;font-size:45px;color:#404040;font-weight:normal;font-style:normal;transform:translateX(-50%);">22</div>
<div class="t" style="left:41.0px;top:2538.9px;font-size:45px;color:#404040;font-weight:normal;font-style:normal;transform:translateX(-50%);">23</div>
<div class="a" style="left:0;top:2611px;width:88px;height:11px;overflow:hidden"><div class="t" style="left:41px;top:-4.1px;transform:translateX(-50%);font-size:45px;color:#404040;position:absolute">24</div></div>
<div class="a" style="left:841px;top:967px;width:220px;height:146px;background:#f6e6e8;"></div>
<div class="a" style="left:90px;top:1113px;width:288px;height:636px;background:#f2eef7;"></div>
<div class="a" style="left:841px;top:1114px;width:220px;height:94px;background:#e4edf8;"></div>
<div class="a" style="left:90px;top:1182px;width:286px;height:2px;background:#d6d2dc;"></div>
<div class="a" style="left:90px;top:1252px;width:286px;height:2px;background:#d6d2dc;"></div>
<div class="a" style="left:90px;top:1323px;width:286px;height:2px;background:#d6d2dc;"></div>
<div class="a" style="left:90px;top:1393px;width:286px;height:2px;background:#d6d2dc;"></div>
<div class="a" style="left:90px;top:1464px;width:286px;height:2px;background:#d6d2dc;"></div>
<div class="a" style="left:90px;top:1534px;width:286px;height:2px;background:#d6d2dc;"></div>
<div class="a" style="left:90px;top:1605px;width:286px;height:2px;background:#d6d2dc;"></div>
<div class="a" style="left:90px;top:1675px;width:286px;height:2px;background:#d6d2dc;"></div>
<div class="a" style="left:843px;top:1182px;width:216px;height:2px;background:#ccd3dc;"></div>
<div class="a" style="left:838px;top:964px;width:226px;height:5px;background:#a8414b;"></div>
<div class="a" style="left:838px;top:1111px;width:226px;height:5px;background:#b43a46;"></div>
<div class="a" style="left:837px;top:965px;width:5px;height:151px;background:#a8414b;"></div>
<div class="a" style="left:1059px;top:965px;width:5px;height:151px;background:#bd3843;"></div>
<div class="a" style="left:836px;top:962px;width:12px;height:12px;background:#c8333e;"></div>
<div class="a" style="left:1057px;top:962px;width:12px;height:12px;background:#c8333e;"></div>
<div class="a" style="left:836px;top:1107px;width:12px;height:12px;background:#c8333e;"></div>
<div class="a" style="left:1057px;top:1107px;width:12px;height:12px;background:#c8333e;"></div>
<div class="a" style="left:838px;top:1120px;width:4px;height:86px;background:#1f6cc0;"></div>
<div class="a" style="left:1059px;top:1120px;width:4px;height:86px;background:#1f6cc0;"></div>
<div class="a" style="left:95px;top:1110px;width:285px;height:4px;background:#6f5a9e;"></div>
<div class="a" style="left:376px;top:1110px;width:4px;height:642px;background:#6f5a9e;"></div>
<div class="a" style="left:95px;top:1747px;width:285px;height:5px;background:#6f5a9e;"></div>
<div class="a" style="left:89px;top:1108px;width:6px;height:8px;background:#6f5a9e;"></div>
<div class="a" style="left:89px;top:1743px;width:6px;height:9px;background:#6f5a9e;"></div>
<div class="a" style="left:371px;top:1742px;width:13px;height:13px;background:#6f5a9e;"></div>
<div class="a" style="left:372px;top:1106px;width:12px;height:11px;background:#6f5a9e;"></div>
<div class="t" style="left:404.0px;top:866.8px;font-size:86.5px;color:#000;font-weight:normal;font-style:normal;">Dnevna zarada</div>
<div class="t" style="left:98.0px;top:1020.2px;font-size:47px;color:#000;font-weight:bold;font-style:italic;">Vrsta voća</div>
<div class="t" style="left:603.0px;top:985.2px;font-size:47px;color:#000;font-weight:bold;font-style:italic;transform:translateX(-100%);">Prodato</div>
<div class="t" style="left:603.0px;top:1053.2px;font-size:47px;color:#000;font-weight:bold;font-style:italic;transform:translateX(-100%);">(kg)</div>
<div class="t" style="left:822.0px;top:985.2px;font-size:47px;color:#000;font-weight:bold;font-style:italic;transform:translateX(-100%);">Cena</div>
<div class="t" style="left:822.0px;top:1053.2px;font-size:47px;color:#000;font-weight:bold;font-style:italic;transform:translateX(-100%);">din/kg</div>
<div class="t" style="left:1040.0px;top:1020.2px;font-size:47px;color:#000;font-weight:bold;font-style:italic;transform:translateX(-100%);">Zarada</div>
<div class="t" style="left:1293.0px;top:1020.2px;font-size:47px;color:#000;font-weight:bold;font-style:italic;transform:translateX(-100%);">Procenat</div>
<div class="t" style="left:98.0px;top:1128.2px;font-size:47px;color:#000;font-weight:normal;font-style:normal;">Jabuke</div>
<div class="t" style="left:615.0px;top:1128.2px;font-size:47px;color:#000;font-weight:normal;font-style:normal;transform:translateX(-100%);">55</div>
<div class="t" style="left:98.0px;top:1198.2px;font-size:47px;color:#000;font-weight:normal;font-style:normal;">Kruške</div>
<div class="t" style="left:615.0px;top:1198.2px;font-size:47px;color:#000;font-weight:normal;font-style:normal;transform:translateX(-100%);">25</div>
<div class="t" style="left:98.0px;top:1269.2px;font-size:47px;color:#000;font-weight:normal;font-style:normal;">Banane</div>
<div class="t" style="left:615.0px;top:1269.2px;font-size:47px;color:#000;font-weight:normal;font-style:normal;transform:translateX(-100%);">72</div>
<div class="t" style="left:98.0px;top:1339.2px;font-size:47px;color:#000;font-weight:normal;font-style:normal;">Breskve</div>
<div class="t" style="left:615.0px;top:1339.2px;font-size:47px;color:#000;font-weight:normal;font-style:normal;transform:translateX(-100%);">65</div>
<div class="t" style="left:98.0px;top:1410.2px;font-size:47px;color:#000;font-weight:normal;font-style:normal;">Grožđe</div>
<div class="t" style="left:615.0px;top:1410.2px;font-size:47px;color:#000;font-weight:normal;font-style:normal;transform:translateX(-100%);">35</div>
<div class="t" style="left:98.0px;top:1480.2px;font-size:47px;color:#000;font-weight:normal;font-style:normal;">Narandže</div>
<div class="t" style="left:615.0px;top:1480.2px;font-size:47px;color:#000;font-weight:normal;font-style:normal;transform:translateX(-100%);">80</div>
<div class="t" style="left:98.0px;top:1551.2px;font-size:47px;color:#000;font-weight:normal;font-style:normal;">Dinje</div>
<div class="t" style="left:615.0px;top:1551.2px;font-size:47px;color:#000;font-weight:normal;font-style:normal;transform:translateX(-100%);">120</div>
<div class="t" style="left:98.0px;top:1621.2px;font-size:47px;color:#000;font-weight:normal;font-style:normal;">Grejpfrut</div>
<div class="t" style="left:615.0px;top:1621.2px;font-size:47px;color:#000;font-weight:normal;font-style:normal;transform:translateX(-100%);">40</div>
<div class="t" style="left:98.0px;top:1692.2px;font-size:47px;color:#000;font-weight:normal;font-style:normal;">Limun</div>
<div class="t" style="left:615.0px;top:1692.2px;font-size:47px;color:#000;font-weight:normal;font-style:normal;transform:translateX(-100%);">20</div>
<div class="t" style="left:98.0px;top:1762.2px;font-size:47px;color:#000;font-weight:normal;font-style:normal;letter-spacing:-2px;">UKUPNO</div>
<div class="t" style="left:615.0px;top:1762.2px;font-size:47px;color:#000;font-weight:normal;font-style:normal;transform:translateX(-100%);">512</div>
<div class="t" style="left:834.0px;top:1128.2px;font-size:47px;color:#000;font-weight:normal;font-style:normal;transform:translateX(-100%);">70</div>
<div class="t" style="left:1053.0px;top:1128.2px;font-size:47px;color:#000;font-weight:normal;font-style:normal;transform:translateX(-100%);">3850</div>
<div class="t" style="left:1305.0px;top:1128.2px;font-size:47px;color:#000;font-weight:normal;font-style:normal;transform:translateX(-100%);">5.83%</div>
<div class="a" style="left:763px;top:1208px;width:1749px;height:1049px;background:#ffffff;"></div>
<div class="a" style="left:762px;top:1207px;width:1752px;height:1052px;border:3px solid #5e5e5e"></div>
<div class="t" style="left:1634.0px;top:1255.2px;font-size:60px;color:#595959;font-weight:normal;font-style:normal;transform:translateX(-50%);">Zarada</div>
<svg style="left:0;top:0" width="3251" height="2784"><path d="M1636.5 1699 L1636.50 1387.00 A312 312 0 0 1 1747.29 1407.33 Z" fill="#5b9bd5" stroke="#fff" stroke-width="6" stroke-linejoin="round"/><path d="M1636.5 1699 L1747.29 1407.33 A312 312 0 0 1 1830.30 1454.49 Z" fill="#ed7d31" stroke="#fff" stroke-width="6" stroke-linejoin="round"/><path d="M1636.5 1699 L1830.30 1454.49 A312 312 0 0 1 1944.74 1650.73 Z" fill="#a5a5a5" stroke="#fff" stroke-width="6" stroke-linejoin="round"/><path d="M1636.5 1699 L1944.74 1650.73 A312 312 0 0 1 1933.40 1794.90 Z" fill="#ffc000" stroke="#fff" stroke-width="6" stroke-linejoin="round"/><path d="M1636.5 1699 L1933.40 1794.90 A312 312 0 0 1 1851.27 1925.32 Z" fill="#4472c4" stroke="#fff" stroke-width="6" stroke-linejoin="round"/><path d="M1636.5 1699 L1851.27 1925.32 A312 312 0 0 1 1352.37 1827.89 Z" fill="#70ad47" stroke="#fff" stroke-width="6" stroke-linejoin="round"/><path d="M1636.5 1699 L1352.37 1827.89 A312 312 0 0 1 1324.59 1691.38 Z" fill="#255e91" stroke="#fff" stroke-width="6" stroke-linejoin="round"/><path d="M1636.5 1699 L1324.59 1691.38 A312 312 0 0 1 1491.47 1422.76 Z" fill="#9e480e" stroke="#fff" stroke-width="6" stroke-linejoin="round"/><path d="M1636.5 1699 L1491.47 1422.76 A312 312 0 0 1 1636.50 1387.00 Z" fill="#636363" stroke="#fff" stroke-width="6" stroke-linejoin="round"/></svg>
<div class="a" style="left:1110px;top:2101px;width:17px;height:17px;background:#5b9bd5;"></div>
<div class="t" style="left:1140.0px;top:2088.7px;font-size:37px;color:#595959;font-weight:normal;font-style:normal;">Jabuke</div>
<div class="a" style="left:1328px;top:2101px;width:17px;height:17px;background:#ed7d31;"></div>
<div class="t" style="left:1360.0px;top:2088.7px;font-size:37px;color:#595959;font-weight:normal;font-style:normal;">Kruške</div>
<div class="a" style="left:1546px;top:2101px;width:17px;height:17px;background:#a5a5a5;"></div>
<div class="t" style="left:1578.0px;top:2088.7px;font-size:37px;color:#595959;font-weight:normal;font-style:normal;">Banane</div>
<div class="a" style="left:1764px;top:2101px;width:17px;height:17px;background:#ffc000;"></div>
<div class="t" style="left:1795.0px;top:2088.7px;font-size:37px;color:#595959;font-weight:normal;font-style:normal;">Breskve</div>
<div class="a" style="left:1982px;top:2101px;width:17px;height:17px;background:#4472c4;"></div>
<div class="t" style="left:2014.0px;top:2088.7px;font-size:37px;color:#595959;font-weight:normal;font-style:normal;">Grožđe</div>
<div class="a" style="left:1110px;top:2185px;width:17px;height:17px;background:#70ad47;"></div>
<div class="t" style="left:1142.0px;top:2171.7px;font-size:37px;color:#595959;font-weight:normal;font-style:normal;">Narandže</div>
<div class="a" style="left:1328px;top:2185px;width:17px;height:17px;background:#255e91;"></div>
<div class="t" style="left:1360.0px;top:2171.7px;font-size:37px;color:#595959;font-weight:normal;font-style:normal;">Dinje</div>
<div class="a" style="left:1546px;top:2185px;width:17px;height:17px;background:#9e480e;"></div>
<div class="t" style="left:1578.0px;top:2171.7px;font-size:37px;color:#595959;font-weight:normal;font-style:normal;">Grejpfrut</div>
<div class="a" style="left:1764px;top:2185px;width:17px;height:17px;background:#636363;"></div>
<div class="t" style="left:1795.0px;top:2171.7px;font-size:37px;color:#595959;font-weight:normal;font-style:normal;">Limun</div>
<svg style="left:0;top:0" width="3251" height="2784"><circle cx="763" cy="1208" r="17" fill="#fff" stroke="#5e5e5e" stroke-width="5.5"/><circle cx="1638" cy="1208" r="17" fill="#fff" stroke="#5e5e5e" stroke-width="5.5"/><circle cx="2512" cy="1208" r="17" fill="#fff" stroke="#5e5e5e" stroke-width="5.5"/><circle cx="763" cy="1733" r="17" fill="#fff" stroke="#5e5e5e" stroke-width="5.5"/><circle cx="2512" cy="1733" r="17" fill="#fff" stroke="#5e5e5e" stroke-width="5.5"/><circle cx="763" cy="2257" r="17" fill="#fff" stroke="#5e5e5e" stroke-width="5.5"/><circle cx="1638" cy="2257" r="17" fill="#fff" stroke="#5e5e5e" stroke-width="5.5"/><circle cx="2512" cy="2257" r="17" fill="#fff" stroke="#5e5e5e" stroke-width="5.5"/></svg>
<div class="a" style="left:2556px;top:1206px;width:101px;height:100px;background:#fff;border:2.5px solid #5a5a5a"></div>
<div class="a" style="left:2556px;top:1344px;width:101px;height:100px;background:#fff;border:2.5px solid #5a5a5a"></div>
<div class="a" style="left:2556px;top:1483px;width:101px;height:100px;background:#fff;border:2.5px solid #5a5a5a"></div>
<svg style="left:2564px;top:1216px;" width="78" height="78" viewBox="0 0 78 78"><path d="M39 1 V77 M1 39 H77" stroke="#3a9a52" stroke-width="3.5"/></svg>
<svg style="left:2560px;top:1358px;" width="90" height="76" viewBox="0 0 90 76">
<path d="M84 4 Q89 8 82 18 L42 58 L32 50 L72 10 Q80 0 84 4 Z" fill="#fff" stroke="#404040" stroke-width="3.2" stroke-linejoin="round"/>
<path d="M32 50 L42 58 Q42 72 24 74 Q10 76 2 72 Q14 68 14 60 Q16 46 32 50 Z" fill="#7ab7ea" stroke="#2b7cd3" stroke-width="3.2" stroke-linejoin="round"/></svg>
<svg style="left:2563px;top:1494px;" width="80" height="82" viewBox="0 0 80 82"><path d="M3 3 H77 V14 L48 46 V78 H32 V46 L3 14 Z" fill="#fff" stroke="#404040" stroke-width="3.5" stroke-linejoin="round"/></svg>
<div class="a" style="left:3192px;top:778px;width:59px;height:1844px;background:#f5f5f5;"></div>
<svg style="left:3208px;top:790px;" width="36" height="28" viewBox="0 0 36 28"><path d="M18 3 L33 24 H3 Z" fill="#6e6e6e" stroke="#6e6e6e" stroke-width="4" stroke-linejoin="round"/></svg>
<div class="a" style="left:3211px;top:835px;width:30px;height:1654px;background:#6f6f6f;border-radius:15px"></div>
<svg style="left:3207px;top:2582px;" width="38" height="30" viewBox="0 0 38 30"><path d="M3 4 H35 L19 26 Z" fill="#6e6e6e" stroke="#6e6e6e" stroke-width="4" stroke-linejoin="round"/></svg>
<div class="a" style="left:0px;top:2623px;width:3251px;height:82px;background:#f3f3f3;"></div>
<div class="a" style="left:1905px;top:2623px;width:1287px;height:82px;background:#f3f3f3;"></div>
<svg style="left:60px;top:2645px;" width="24" height="34" viewBox="0 0 24 34"><path d="M20 3 V31 L4 17 Z" fill="#c4c4c4" stroke="#c4c4c4" stroke-width="3" stroke-linejoin="round"/></svg>
<svg style="left:146px;top:2645px;" width="24" height="34" viewBox="0 0 24 34"><path d="M4 3 V31 L20 17 Z" fill="#a9a9a9" stroke="#a9a9a9" stroke-width="3" stroke-linejoin="round"/></svg>
<div class="a" style="left:280px;top:2620px;width:215px;height:76px;background:#fff;border-left:2px solid #bdbdbd;border-right:2px solid #bdbdbd"></div>
<div class="a" style="left:280px;top:2690px;width:215px;height:7px;background:#1d6e41;"></div>
<div class="t" style="left:310.0px;top:2635.2px;font-size:47px;color:#1d6b40;font-weight:normal;font-style:normal;-webkit-text-stroke:1.6px #1d6b40;letter-spacing:1.5px;">Sheet1</div>
<svg style="left:588px;top:2634px;" width="58" height="58" viewBox="0 0 58 58"><circle cx="29" cy="29" r="25" fill="none" stroke="#5c5c5c" stroke-width="3"/><path d="M29 16 V42 M16 29 H42" stroke="#5c5c5c" stroke-width="3.4"/></svg>
<div class="a" style="left:1908px;top:2624px;width:84px;height:78px;background:#efefef;"></div>
<div class="a" style="left:1992px;top:2624px;width:1200px;height:78px;background:#f7f7f7;"></div>
<div class="a" style="left:1946px;top:2642px;width:7px;height:7px;background:#a0a0a0;"></div>
<div class="a" style="left:1946px;top:2657px;width:7px;height:7px;background:#a0a0a0;"></div>
<div class="a" style="left:1946px;top:2672px;width:7px;height:7px;background:#a0a0a0;"></div>
<svg style="left:2008px;top:2642px;" width="30" height="36" viewBox="0 0 30 36"><path d="M26 3 V33 L4 18 Z" fill="#6e6e6e" stroke="#6e6e6e" stroke-width="4" stroke-linejoin="round"/></svg>
<div class="a" style="left:2054px;top:2645px;width:993px;height:30px;background:#6f6f6f;border-radius:15px"></div>
<svg style="left:3148px;top:2642px;" width="30" height="36" viewBox="0 0 30 36"><path d="M4 3 V33 L26 18 Z" fill="#6e6e6e" stroke="#6e6e6e" stroke-width="4" stroke-linejoin="round"/></svg>
<div class="a" style="left:0px;top:2705px;width:3251px;height:79px;background:#f3f3f3;"></div>
<div class="a" style="left:0px;top:2704px;width:3251px;height:3px;background:#fbfbfb;"></div>
<div class="t" style="left:17.0px;top:2729.5px;font-size:36px;color:#363636;font-weight:normal;font-style:normal;">Ready</div>
<svg style="left:186px;top:2718px;" width="60" height="56" viewBox="0 0 60 56">
<circle cx="29" cy="10" r="7" fill="none" stroke="#363636" stroke-width="3"/>
<path d="M4 16 Q16 22 29 20 Q42 22 54 16" fill="none" stroke="#363636" stroke-width="3" stroke-linecap="round"/>
<path d="M22 22 V34 Q14 44 12 52 M36 22 V30" fill="none" stroke="#363636" stroke-width="3" stroke-linecap="round"/>
<path d="M30 42 L38 50 L56 32" fill="none" stroke="#363636" stroke-width="3.2" stroke-linecap="round" stroke-linejoin="round"/></svg>
<div class="t" style="left:257.0px;top:2728.7px;font-size:37px;color:#363636;font-weight:normal;font-style:normal;">Accessibility: Good to go</div>
<div class="t" style="left:1222.0px;top:2727.8px;font-size:38px;color:#363636;font-weight:normal;font-style:normal;">Average: 7335.555556</div>
<div class="t" style="left:1658.0px;top:2728.7px;font-size:37px;color:#363636;font-weight:normal;font-style:normal;">Count: 20</div>
<div class="t" style="left:1874.0px;top:2728.7px;font-size:37px;color:#363636;font-weight:normal;font-style:normal;">Sum: 66020</div>
<div class="a" style="left:2141px;top:2706px;width:145px;height:78px;background:#e1e1e1;"></div>
<svg style="left:2185px;top:2718px;" width="52" height="52" viewBox="0 0 52 52"><rect x="3" y="3" width="44" height="44" fill="none" stroke="#2e2e2e" stroke-width="3.5"/><path d="M3 18 H47 M3 32 H47 M18 3 V47 M32 3 V47" stroke="#2e2e2e" stroke-width="3"/></svg>
<svg style="left:2330px;top:2717px;" width="56" height="52" viewBox="0 0 56 52"><rect x="3" y="3" width="48" height="44" fill="none" stroke="#2e2e2e" stroke-width="3.5"/><rect x="13" y="11" width="28" height="28" fill="none" stroke="#2e2e2e" stroke-width="3"/><path d="M18 20 H36 M18 26 H36 M18 32 H36" stroke="#2e2e2e" stroke-width="2.5"/></svg>
<svg style="left:2477px;top:2717px;" width="56" height="52" viewBox="0 0 56 52"><rect x="3" y="3" width="48" height="44" fill="none" stroke="#2e2e2e" stroke-width="3.5"/><path d="M16 3 V22 H51 M29 3 V22" fill="none" stroke="#2e2e2e" stroke-width="3"/></svg>
<div class="a" style="left:2597px;top:2742px;width:27px;height:3px;background:#363636;"></div>
<div class="a" style="left:2645px;top:2743px;width:360px;height:3px;background:#5e5e5e;"></div>
<div class="a" style="left:2815px;top:2723px;width:21px;height:41px;background:#5e5e5e;border-radius:3px"></div>
<div class="a" style="left:3024px;top:2742px;width:28px;height:3px;background:#363636;"></div>
<div class="a" style="left:3036px;top:2730px;width:3px;height:27px;background:#363636;"></div>
<div class="t" style="left:3100.0px;top:2725.7px;font-size:37px;color:#363636;font-weight:normal;font-style:normal;">100%</div></body></html>
